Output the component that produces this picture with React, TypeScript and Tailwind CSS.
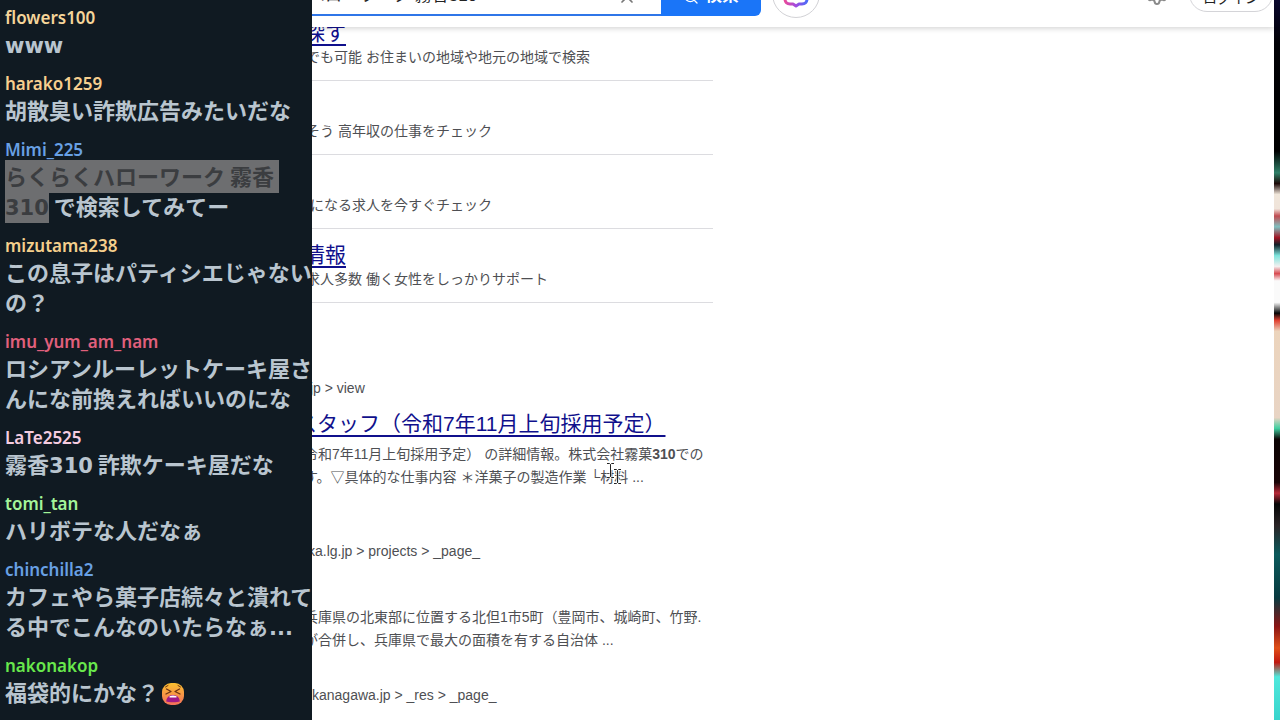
import React from "react";
import { Search, Settings, X } from "lucide-react";

type ChatMessage = {
  name: string;
  color: string;
  lines: React.ReactNode[];
};

const Latin = ({ children }: { children: React.ReactNode }) => (
  <span className="font-['DejaVu_Sans'] text-[21px] leading-none">{children}</span>
);

const Marked = ({ children }: { children: React.ReactNode }) => (
  <mark className="inline-block h-[33px] bg-[#6d6e70] align-top leading-[30px] text-[#3b3d40]">{children}</mark>
);

const TiredFace = () => (
  <svg viewBox="0 0 24 24" className="ml-0.5 inline-block size-6 align-[-5px]" role="img" aria-label="tired face">
    <defs>
      <linearGradient id="face" x1="0" y1="0" x2="0" y2="1">
        <stop offset="0" stopColor="#fbc02f" />
        <stop offset="1" stopColor="#f3705a" />
      </linearGradient>
    </defs>
    <rect x="1" y="1" width="22" height="22" rx="9" fill="url(#face)" />
    <path d="M5.500 7 10 9.500l-5 2.500M18.500 7 14 9.500l5 2.500" fill="none" stroke="#6b3414" strokeWidth="1.300" strokeLinecap="round" strokeLinejoin="round" />
    <path d="M7 3.500 4.500 5M17 3.500 19.500 5" stroke="#6b3414" strokeWidth="1" strokeLinecap="round" />
    <path d="M12 13c-4 0-6.500 2.500-6.800 6.500 2 1 11.600 1 13.600 0C18.500 15.500 16 13 12 13z" fill="#a01a86" />
    <path d="M8.500 14.200c1.800-1 5.200-1 7 0v1.300h-7z" fill="#fff" />
  </svg>
);

const messages: ChatMessage[] = [
  { name: "flowers100", color: "text-[#f5d59a]", lines: [<Latin>www</Latin>] },
  { name: "harako1259", color: "text-[#f7cf8f]", lines: ["胡散臭い詐欺広告みたいだな"] },
  {
    name: "Mimi_225",
    color: "text-[#68a0e4]",
    lines: [
      <Marked>らくらくハローワーク 霧香&nbsp;</Marked>,
      <>
        <Marked><Latin>310</Latin></Marked> で検索してみてー
      </>,
    ],
  },
  { name: "mizutama238", color: "text-[#f5cf8c]", lines: ["この息子はパティシエじゃない", "の？"] },
  { name: "imu_yum_am_nam", color: "text-[#e0607c]", lines: ["ロシアンルーレットケーキ屋さ", "んにな前換えればいいのにな"] },
  { name: "LaTe2525", color: "text-[#f5cce0]", lines: [<>霧香<Latin>310</Latin> 詐欺ケーキ屋だな</>] },
  { name: "tomi_tan", color: "text-[#a4f59a]", lines: ["ハリボテな人だなぁ"] },
  { name: "chinchilla2", color: "text-[#68a0e4]", lines: ["カフェやら菓子店続々と潰れて", <>る中でこんなのいたらなぁ<Latin>...</Latin></>] },
  { name: "nakonakop", color: "text-[#68e84c]", lines: [<>福袋的にかな？<TiredFace /></>] },
];

const ads = [
  { title: "探す", text: "でも可能 お住まいの地域や地元の地域で検索", pad: "pl-0.5" },
  { title: "", text: "そう 高年収の仕事をチェック", pad: "pl-0.5" },
  { title: "", text: "になる求人を今すぐチェック", pad: "pl-1.5" },
  { title: "情報", text: "求人多数 働く女性をしっかりサポート", pad: "pl-0.5" },
];

const results = [
  {
    url: ".jp > view",
    pad: "pl-0.5",
    title: "スタッフ（令和7年11月上旬採用予定）",
    lines: [
      <>令和7年11月上旬採用予定） の詳細情報。株式会社霧菓<b>310</b>での</>,
      "す。▽具体的な仕事内容 ＊洋菓子の製造作業 └材料 ...",
    ],
    space: "mb-[50px]",
  },
  {
    url: "ka.lg.jp > projects > _page_",
    pad: "pl-1",
    title: "",
    lines: [
      "兵庫県の北東部に位置する北但1市5町（豊岡市、城崎町、竹野.",
      "が合併し、兵庫県で最大の面積を有する自治体 ...",
    ],
    space: "mb-[31px]",
  },
  { url: "kanagawa.jp > _res > _page_", pad: "pl-2", title: "", lines: [], space: "" },
];

const Chat = () => (
  <aside className="relative z-20 w-[312px] shrink-0 bg-[#101a22] pt-2 pl-[5px] font-['Noto_Sans','Noto_Sans_CJK_JP',sans-serif] font-bold whitespace-nowrap">
    {messages.map((m) => (
      <div key={m.name} className="mb-4">
        <div className={`text-[17px] leading-5 font-semibold ${m.color}`}>{m.name}</div>
        {m.lines.map((line, i) => (
          <p key={i} className="h-[30px] font-['Noto_Sans_CJK_JP',sans-serif] text-[22px] leading-[30px] text-[#b9c5cf]">
            {line}
          </p>
        ))}
      </div>
    ))}
  </aside>
);

const Header = () => (
  <header className="relative z-10 -mt-10 flex h-[67px] items-center bg-white pr-px shadow-[0_1px_6px_rgba(0,0,0,0.2)]">
    <form className="flex h-11 w-[457px]" onSubmit={(e) => e.preventDefault()}>
      <div className="flex min-w-0 flex-1 items-center border-b-2 border-[#2f76e8] pt-2 pr-6">
        <input
          aria-label="検索キーワード"
          className="min-w-0 flex-1 pl-1 text-[17px] text-[#222] outline-none"
          defaultValue="ハローワーク 霧香310"
        />
        <button type="button" aria-label="クリア">
          <X className="size-5 text-[#777]" />
        </button>
      </div>
      <button className="flex w-[100px] items-center justify-center gap-1.5 rounded-r-md bg-[#1a75f8] pt-1.5 text-[17px] font-bold text-white">
        <Search className="size-4" strokeWidth={2} />
        検索
      </button>
    </form>
    <button aria-label="AIアシスタント" className="ml-[11px] flex size-12 items-center justify-center rounded-full border border-[#d2d2d6]">
      <svg viewBox="0 0 28 28" className="size-7" fill="none">
        <defs>
          <linearGradient id="ai" x1="0" y1="0" x2="1" y2="0">
            <stop offset="0" stopColor="#e84a9c" />
            <stop offset="0.500" stopColor="#a04be0" />
            <stop offset="1" stopColor="#4c6cf8" />
          </linearGradient>
        </defs>
        <path
          d="M8 4h12c3.500 0 5 2 5 5v10c0 3-2 5-5 5h-3l-3 2-3-2H8c-3 0-5-2-5-5V9c0-3 2-5 5-5z"
          stroke="url(#ai)"
          strokeWidth="3"
          strokeLinejoin="round"
        />
      </svg>
    </button>
    <button aria-label="設定" className="mr-5 ml-auto">
      <Settings className="size-6 text-[#8a8a8a]" />
    </button>
    <button className="h-9 w-[84px] rounded-full border border-[#d4d4d8] pt-2 text-sm text-[#222]">ログイン</button>
  </header>
);

const Cursor = ({ place }: { place: string }) => (
  <svg viewBox="0 0 9 17" className={`absolute h-[17px] w-[9px] ${place}`} fill="none" aria-hidden="true">
    <path d="M1 1.500h2.500l1 1 1-1H8M4.500 2.500v12M1 15.500h2.500l1-1 1 1H8" stroke="#fff" strokeWidth="2" />
    <path d="M1 1.500h2.500l1 1 1-1H8M4.500 2.500v12M1 15.500h2.500l1-1 1 1H8" stroke="#222" />
  </svg>
);

const SearchPage = () => (
  <main className="relative -ml-2 min-w-0 flex-1 bg-white font-['Liberation_Sans','Noto_Sans_CJK_JP',sans-serif] text-sm text-[#4e4f53]">
    <Header />
    <div className="-mt-5 max-w-[409px] whitespace-nowrap">
      {ads.map((ad) => (
        <section key={ad.text} className="border-b border-[#dcdce0] pt-3 pb-3">
          <h3 className="h-7 text-[21px] leading-7">
            {ad.title && <a href="#" className="text-[#10108c] underline decoration-2 underline-offset-4">{ad.title}</a>}
          </h3>
          <p className={`h-[21px] leading-[21px] ${ad.pad}`}>{ad.text}</p>
        </section>
      ))}
      <div className="mt-[73px]">
        {results.map((r) => (
          <section key={r.url} className={r.space}>
            <cite className={`block h-6 leading-6 not-italic ${r.pad}`}>{r.url}</cite>
            <h3 className="mt-2 mb-[3px] h-8 text-[21px] leading-8">
              {r.title && <a href="#" className="-ml-2 text-[#10108c] underline decoration-2 underline-offset-4">{r.title}</a>}
            </h3>
            {r.lines.map((line, i) => (
              <p key={i} className="h-[23px] leading-[23px]">{line}</p>
            ))}
          </section>
        ))}
      </div>
    </div>
    <Cursor place="top-[462px] left-[302px]" />
    <Cursor place="top-[468px] left-[309px]" />
  </main>
);

const App = () => {
  return (
    <div className="flex h-screen overflow-hidden bg-white">
      <Chat />
      <SearchPage />
      <div className="w-1.5 shrink-0 bg-[linear-gradient(to_bottom,#0b0830_0%,#020206_6%,#000_21%,#2f8068_24%,#1c0806_25.500%,#f0e6da_27%,#f0e4da_29%,#c04a50_30%,#7fc0c0_31.500%,#a01424_33%,#102028_34%,#7ce4dc_35.500%,#f4f0f0_37%,#d84a50_38%,#fafafa_39%,#fafafa_42%,#050505_43.500%,#e04030_44.500%,#ecd4bc_46%,#e8d4c4_58%,#40cfa0_59.500%,#0c0404_61%,#1a0508_67%,#b82a38_68.500%,#060606_70%,#2a2426_73%,#0c5a5c_77%,#083a40_83%,#8a1414_87%,#e05018_90%,#c01810_92%,#50e8dc_94%,#38d4cc_100%)]" />
    </div>
  );
};

export default App;
